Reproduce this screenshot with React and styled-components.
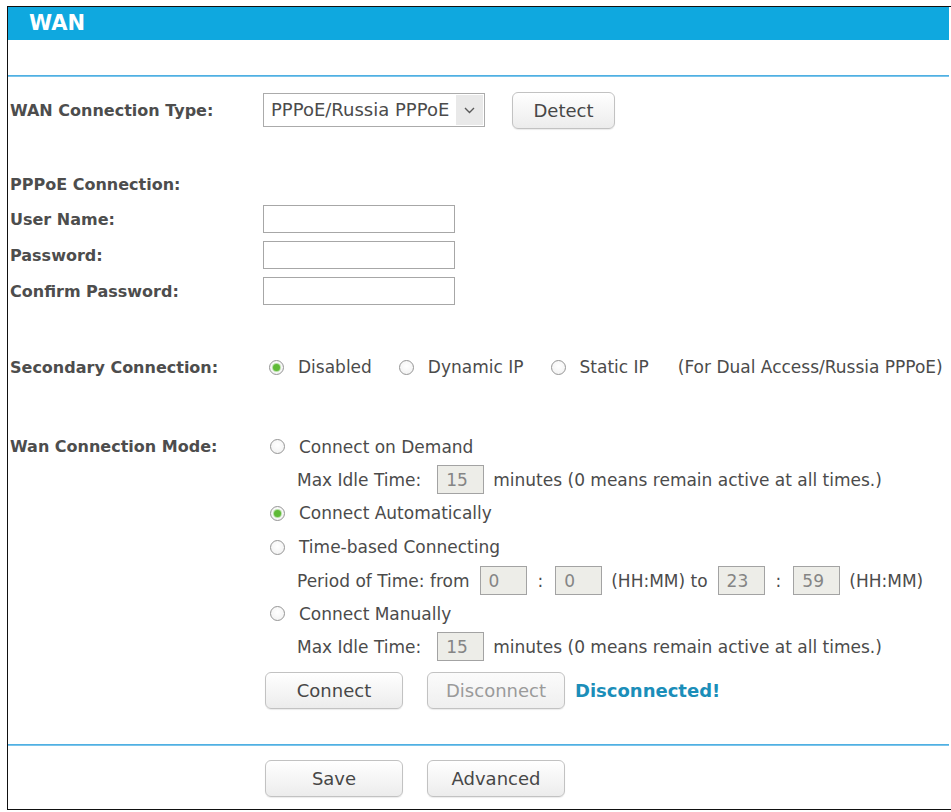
import React from "react";
import styled, { createGlobalStyle } from "styled-components";

const GlobalStyle = createGlobalStyle`
  html, body {
    margin: 0;
    padding: 0;
    background: #ffffff;
  }
  body {
    font-family: "DejaVu Sans", Tahoma, Verdana, sans-serif;
    font-size: 17px;
    color: #4b4b4b;
    overflow: hidden;
  }
`;

function Radio({ checked, label }) {
  return (
    <RadioLabel>
      <RadioDot checked={checked} />
      <span>{label}</span>
    </RadioLabel>
  );
}

function App() {
  return (
    <>
      <GlobalStyle />
      <Frame>
        <Header>WAN</Header>
        <Divider />

        <Row top={14} height={38}>
          <Label>WAN Connection Type:</Label>
          <Controls>
            <SelectBox>
              <SelectText>PPPoE/Russia PPPoE</SelectText>
              <SelectArrow>
                <svg width="11" height="7" viewBox="0 0 11 7">
                  <path d="M1 1 L5.5 5.5 L10 1" fill="none" stroke="#5a5a5a" strokeWidth="1.4" />
                </svg>
              </SelectArrow>
            </SelectBox>
            <Button width={103} gapLeft={27}>Detect</Button>
          </Controls>
        </Row>

        <Row top={38} height={34}>
          <Label>PPPoE Connection:</Label>
        </Row>
        <Row top={0} height={36}>
          <Label>User Name:</Label>
          <Controls>
            <TextInput />
          </Controls>
        </Row>
        <Row top={0} height={36}>
          <Label>Password:</Label>
          <Controls>
            <TextInput type="password" />
          </Controls>
        </Row>
        <Row top={0} height={36}>
          <Label>Confirm Password:</Label>
          <Controls>
            <TextInput type="password" />
          </Controls>
        </Row>

        <Row top={40} height={36}>
          <Label>Secondary Connection:</Label>
          <Controls indent={6}>
            <Radio checked label="Disabled" />
            <Radio label="Dynamic IP" />
            <Radio label="Static IP" />
            <Note>(For Dual Access/Russia PPPoE)</Note>
          </Controls>
        </Row>

        <Row top={45} height={33}>
          <Label>Wan Connection Mode:</Label>
          <Controls indent={7}>
            <Radio label="Connect on Demand" />
          </Controls>
        </Row>
        <SubRow>
          <span>Max Idle Time:</span>
          <SmallInput value="15" readOnly gapLeft={16} />
          <span>minutes (0 means remain active at all times.)</span>
        </SubRow>
        <Row top={0} height={34}>
          <Label />
          <Controls indent={7}>
            <Radio checked label="Connect Automatically" />
          </Controls>
        </Row>
        <Row top={0} height={34}>
          <Label />
          <Controls indent={7}>
            <Radio label="Time-based Connecting" />
          </Controls>
        </Row>
        <SubRow>
          <span>Period of Time: from</span>
          <SmallInput value="0" readOnly gapLeft={10} />
          <Colon>:</Colon>
          <SmallInput value="0" readOnly />
          <span>(HH:MM) to</span>
          <SmallInput value="23" readOnly gapLeft={10} />
          <Colon>:</Colon>
          <SmallInput value="59" readOnly />
          <span>(HH:MM)</span>
        </SubRow>
        <Row top={0} height={33}>
          <Label />
          <Controls indent={7}>
            <Radio label="Connect Manually" />
          </Controls>
        </Row>
        <SubRow>
          <span>Max Idle Time:</span>
          <SmallInput value="15" readOnly gapLeft={16} />
          <span>minutes (0 means remain active at all times.)</span>
        </SubRow>

        <Row top={8} height={38}>
          <Label />
          <Controls indent={2}>
            <Button width={138}>Connect</Button>
            <Button width={138} gapLeft={24} disabled>
              Disconnect
            </Button>
            <Status>Disconnected!</Status>
          </Controls>
        </Row>

        <Divider top={35} />

        <Row top={13} height={38}>
          <Label />
          <Controls indent={2}>
            <Button width={138}>Save</Button>
            <Button width={138} gapLeft={24}>
              Advanced
            </Button>
          </Controls>
        </Row>
      </Frame>
    </>
  );
}

const Frame = styled.div`
  margin: 6px 0 0 7px;
  width: 950px;
  height: 804px;
  border-top: 1px solid #111;
  border-left: 1px solid #111;
  border-bottom: 1px solid #111;
  box-sizing: border-box;
  display: flex;
  flex-direction: column;
`;

const Header = styled.div`
  height: 33px;
  width: 941px;
  background: #0fa8df;
  color: #ffffff;
  font-weight: bold;
  font-size: 21px;
  line-height: 33px;
  padding-left: 21px;
  box-sizing: border-box;
`;

const Divider = styled.div`
  margin-top: ${(p) => (p.top !== undefined ? p.top : 35)}px;
  width: 941px;
  height: 1px;
  border-bottom: 1px solid #7cc4ea;
  background: #4fb0e3;
`;

const Row = styled.div`
  display: flex;
  align-items: center;
  margin-top: ${(p) => p.top}px;
  height: ${(p) => p.height}px;
  padding-left: 2px;
`;

const Label = styled.div`
  width: 253px;
  flex-shrink: 0;
  font-size: 16px;
  font-weight: bold;
  color: #4d4d4d;
`;

const Controls = styled.div`
  display: flex;
  align-items: center;
  padding-left: ${(p) => p.indent || 0}px;
  white-space: nowrap;
`;

const SubRow = styled.div`
  display: flex;
  align-items: center;
  height: 33px;
  padding-left: 289px;
  white-space: nowrap;
`;

const RadioLabel = styled.label`
  display: inline-flex;
  align-items: center;
  margin-right: 27px;
`;

const RadioDot = styled.span`
  width: 13px;
  height: 13px;
  border-radius: 50%;
  border: 1px solid #959595;
  background: radial-gradient(circle at 50% 40%, #ffffff 0%, #efefef 100%);
  margin-right: 14px;
  position: relative;
  flex-shrink: 0;

  &::after {
    content: "";
    display: ${(p) => (p.checked ? "block" : "none")};
    position: absolute;
    left: 3px;
    top: 3px;
    width: 7px;
    height: 7px;
    border-radius: 50%;
    background: #5fba37;
    box-shadow: 0 0 0 1px #b7dfa6;
  }
`;

const Note = styled.span`
  margin-left: 2px;
`;

const SelectBox = styled.div`
  display: flex;
  align-items: stretch;
  width: 222px;
  height: 34px;
  border: 1px solid #ababab;
  box-sizing: border-box;
  background: #fff;
`;

const SelectText = styled.span`
  flex: 1;
  padding-left: 7px;
  font-size: 18px;
  line-height: 32px;
`;

const SelectArrow = styled.span`
  width: 27px;
  background: #e9e9e9;
  display: flex;
  align-items: center;
  justify-content: center;
  margin: 1px;
`;

const Button = styled.button`
  width: ${(p) => p.width}px;
  height: 37px;
  margin-left: ${(p) => p.gapLeft || 0}px;
  border: 1px solid #c2c2c2;
  border-radius: 6px;
  background: linear-gradient(#ffffff, #ececec);
  box-shadow: 0 1px 1px rgba(0, 0, 0, 0.08);
  font-family: inherit;
  font-size: 18px;
  color: #474747;
  padding: 0;

  &:disabled {
    color: #9a9a9a;
    background: linear-gradient(#fbfbfb, #efefef);
  }
`;

const TextInput = styled.input`
  width: 192px;
  height: 28px;
  box-sizing: border-box;
  border: 1px solid #a7a7a7;
  background: #fff;
  font-family: inherit;
  font-size: 16px;
  padding: 0 6px;
`;

const SmallInput = styled.input`
  width: 47px;
  height: 29px;
  box-sizing: border-box;
  margin-left: ${(p) => p.gapLeft || 0}px;
  margin-right: 9px;
  border: 1px solid #a3a3a3;
  background: #edede8;
  color: #858585;
  font-family: inherit;
  font-size: 17px;
  padding: 0 0 0 8px;
`;

const Colon = styled.span`
  margin: 0 12px 0 2px;
`;

const Status = styled.span`
  margin-left: 10px;
  font-size: 18px;
  font-weight: bold;
  color: #1b8eb9;
`;

export default App;
